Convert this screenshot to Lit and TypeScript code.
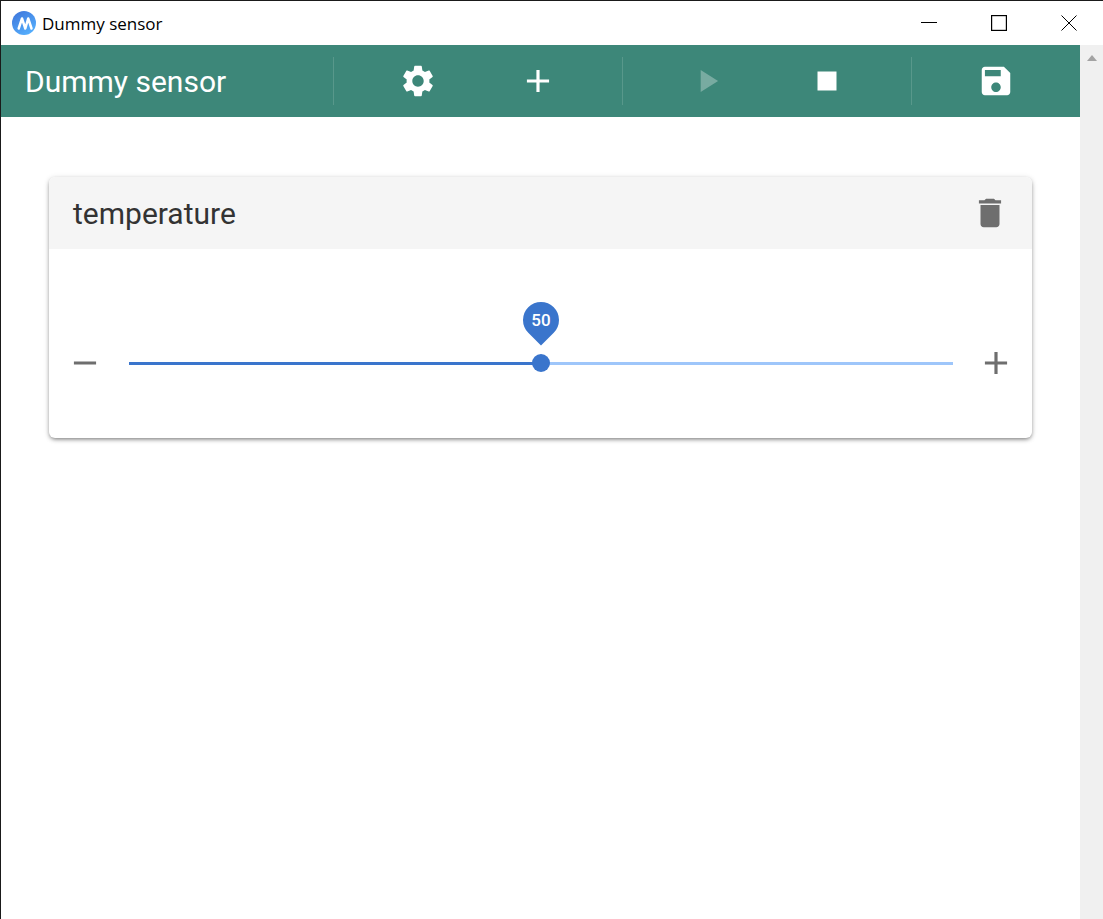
import { LitElement, html, css, svg } from "lit";
import { customElement } from "lit/decorators.js";

const icon = (d: string, cls = "") => html`<svg class="ic ${cls}" viewBox="0 0 24 24" aria-hidden="true"><path d=${d}></path></svg>`;

const P = {
  gear: "M19.14 12.94c.04-.3.06-.61.06-.94 0-.32-.02-.64-.07-.94l2.03-1.58c.18-.14.23-.41.12-.61l-1.92-3.32c-.12-.22-.37-.29-.59-.22l-2.39.96c-.5-.38-1.03-.7-1.62-.94l-.36-2.54c-.04-.24-.24-.41-.48-.41h-3.84c-.24 0-.43.17-.47.41l-.36 2.54c-.59.24-1.13.57-1.62.94l-2.39-.96c-.22-.08-.47 0-.59.22L2.74 8.87c-.12.21-.08.47.12.61l2.03 1.58c-.05.3-.09.63-.09.94s.02.64.07.94l-2.03 1.58c-.18.14-.23.41-.12.61l1.92 3.32c.12.22.37.29.59.22l2.39-.96c.5.38 1.03.7 1.62.94l.36 2.54c.05.24.24.41.48.41h3.84c.24 0 .44-.17.47-.41l.36-2.54c.59-.24 1.13-.56 1.62-.94l2.39.96c.22.08.47 0 .59-.22l1.92-3.32c.12-.22.07-.47-.12-.61l-2.01-1.58zM12 15.6c-1.98 0-3.6-1.62-3.6-3.6s1.62-3.6 3.6-3.6 3.6 1.62 3.6 3.6-1.62 3.6-3.6 3.6z",
  plus: "M19 13h-6v6h-2v-6H5v-2h6V5h2v6h6v2z",
  minus: "M19 13H5v-2h14v2z",
  play: "M8 5v14l11-7z",
  stop: "M6 6h12v12H6z",
  save: "M17 3H5c-1.11 0-2 .9-2 2v14c0 1.1.89 2 2 2h14c1.1 0 2-.9 2-2V7l-4-4zm-5 16c-1.66 0-3-1.34-3-3s1.34-3 3-3 3 1.34 3 3-1.34 3-3 3zm3-10H5V5h10v4z",
  trash: "M6 19c0 1.1.9 2 2 2h8c1.1 0 2-.9 2-2V7H6v12zM19 4h-3.5l-1-1h-5l-1 1H5v2h14V4z",
};

@customElement("app-root")
export class AppRoot extends LitElement {
  static styles = css`
    :host {
      display: flex;
      flex-direction: column;
      box-sizing: border-box;
      width: 1103px;
      height: 919px;
      border-top: 1px solid #1a1a1a;
      border-left: 1px solid #1a1a1a;
      background: #fff;
      overflow: hidden;
      font-family: Roboto, sans-serif;
    }
    .titlebar {
      flex: 0 0 44px;
      display: flex;
      align-items: center;
      padding-left: 11px;
      color: #000;
      font-family: "Open Sans", sans-serif;
      font-size: 17px;
    }
    .logo { width: 24px; height: 24px; margin-right: 6px; flex: none; }
    .name { flex: 1; }
    .win { display: flex; }
    .win button {
      width: 70px;
      height: 44px;
      border: 0;
      padding: 0;
      background: none;
      display: flex;
      align-items: center;
      justify-content: center;
    }
    .win svg { width: 16px; height: 16px; fill: none; stroke: #000; stroke-width: 1; }
    .win .mn svg { margin-left: 2px; margin-top: -1px; }
    .win .mx svg { stroke-width: 1.2; margin-left: 1px; margin-top: -1px; }
    .win .cl svg { margin-left: 2px; margin-top: -1px; }
    .below { flex: 1; display: flex; min-height: 0; }
    .main { flex: 1; display: flex; flex-direction: column; min-width: 0; }
    .scroll {
      flex: 0 0 23px;
      background: #f0f0f0;
      display: flex;
      justify-content: center;
      padding-top: 10px;
      box-sizing: border-box;
    }
    .arrow {
      width: 0;
      height: 0;
      border-left: 5.5px solid transparent;
      border-right: 5.5px solid transparent;
      border-bottom: 6px solid #a3a3a3;
    }
    .toolbar {
      flex: 0 0 72px;
      background: #3d8779;
      display: flex;
      color: #fff;
    }
    .sec {
      display: flex;
      align-items: center;
      justify-content: center;
      position: relative;
    }
    .sec.t { width: 332px; justify-content: flex-start; padding-left: 24px; box-sizing: border-box; font-size: 30px; }
    .sec.g { width: 288px; }
    .sec.l { flex: 1; }
    .sep { flex: 0 0 1px; margin: 12px 0; background: rgba(255, 255, 255, 0.14); }
    .btn { width: 120px; height: 48px; display: flex; align-items: center; justify-content: center; }
    .ic { width: 38px; height: 38px; fill: currentColor; display: block; }
    .dim { opacity: 0.3; }
    .content { flex: 1; padding: 60px 48px 0; box-sizing: border-box; }
    .card {
      border-radius: 6px;
      background: #fff;
      box-shadow: 0 2px 4px -1px rgba(0, 0, 0, 0.5), 0 1px 6px rgba(0, 0, 0, 0.12);
      overflow: hidden;
    }
    .head {
      height: 72px;
      background: #f5f5f5;
      display: flex;
      align-items: center;
      justify-content: space-between;
      padding: 0 23px 0 24px;
      font-size: 30px;
      color: #333;
    }
    .head .ic { color: #6e6e6e; margin-top: -1px; }
    .body {
      height: 189px;
      box-sizing: border-box;
      padding: 95px 17px 0 17px;
      display: flex;
      align-items: flex-start;
      color: #6e6e6e;
    }
    .track {
      flex: 1;
      height: 3px;
      margin: 18px 24px 0 25px;
      background: #9ec6fa;
      position: relative;
    }
    .fill { height: 100%; background: #3a75cc; }
    .thumb {
      position: absolute;
      width: 18px;
      height: 18px;
      top: -8px;
      margin-left: -9px;
      border-radius: 50%;
      background: #3a75cc;
    }
    .pin {
      position: absolute;
      width: 36px;
      height: 36px;
      top: -60px;
      margin-left: -18px;
      border-radius: 50% 50% 0 50%;
      transform: rotate(45deg);
      background: #3a75cc;
    }
    .val {
      position: absolute;
      width: 36px;
      height: 36px;
      top: -60px;
      margin-left: -18px;
      line-height: 36px;
      text-align: center;
      color: #fff;
      font-size: 17px;
      font-weight: 500;
    }
  `;

  render() {
    return html`
      <div class="titlebar">
        <svg class="logo" viewBox="0 0 24 24" aria-hidden="true">
          <defs><linearGradient id="lg" x1="0.2" y1="0" x2="0.8" y2="1"><stop offset="0" stop-color="#3f78dc"></stop><stop offset="1" stop-color="#56b2ff"></stop></linearGradient></defs>
          <circle cx="12" cy="12" r="12" fill="url(#lg)"></circle>
          ${svg`<path d="M6.7 17.5 10 7.5l3.3 10 2.9-10 3.3 10" fill="none" stroke="#fff" stroke-width="2.5" stroke-linejoin="round" stroke-linecap="round"></path>`}
        </svg>
        <span class="name">Dummy sensor</span>
        <div class="win">
          <button class="mn"><svg viewBox="0 0 16 16"><path d="M0 7.5h16"></path></svg></button>
          <button class="mx"><svg viewBox="0 0 16 16"><rect x=".6" y=".6" width="14.8" height="14.8"></rect></svg></button>
          <button class="cl"><svg viewBox="0 0 16 16"><path d="M.5.5l15 15M15.5.5l-15 15"></path></svg></button>
        </div>
      </div>
      <div class="below">
        <div class="main">
          <div class="toolbar">
            <div class="sec t">Dummy sensor</div>
            <div class="sep"></div>
            <div class="sec g">
              <div class="btn">${icon(P.gear)}</div>
              <div class="btn">${icon(P.plus)}</div>
            </div>
            <div class="sep"></div>
            <div class="sec g">
              <div class="btn">${icon(P.play, "dim")}</div>
              <div class="btn">${icon(P.stop)}</div>
            </div>
            <div class="sep"></div>
            <div class="sec l"><div class="btn">${icon(P.save)}</div></div>
          </div>
          <div class="content">
            <div class="card">
              <div class="head"><span>temperature</span>${icon(P.trash)}</div>
              <div class="body">
                ${icon(P.minus)}
                <div class="track">
                  <div class="fill" style="width: 50%"></div>
                  <div class="pin" style="left: 50%"></div>
                  <div class="val" style="left: 50%">50</div>
                  <div class="thumb" style="left: 50%"></div>
                </div>
                ${icon(P.plus)}
              </div>
            </div>
          </div>
        </div>
        <div class="scroll"><div class="arrow"></div></div>
      </div>
    `;
  }
}
